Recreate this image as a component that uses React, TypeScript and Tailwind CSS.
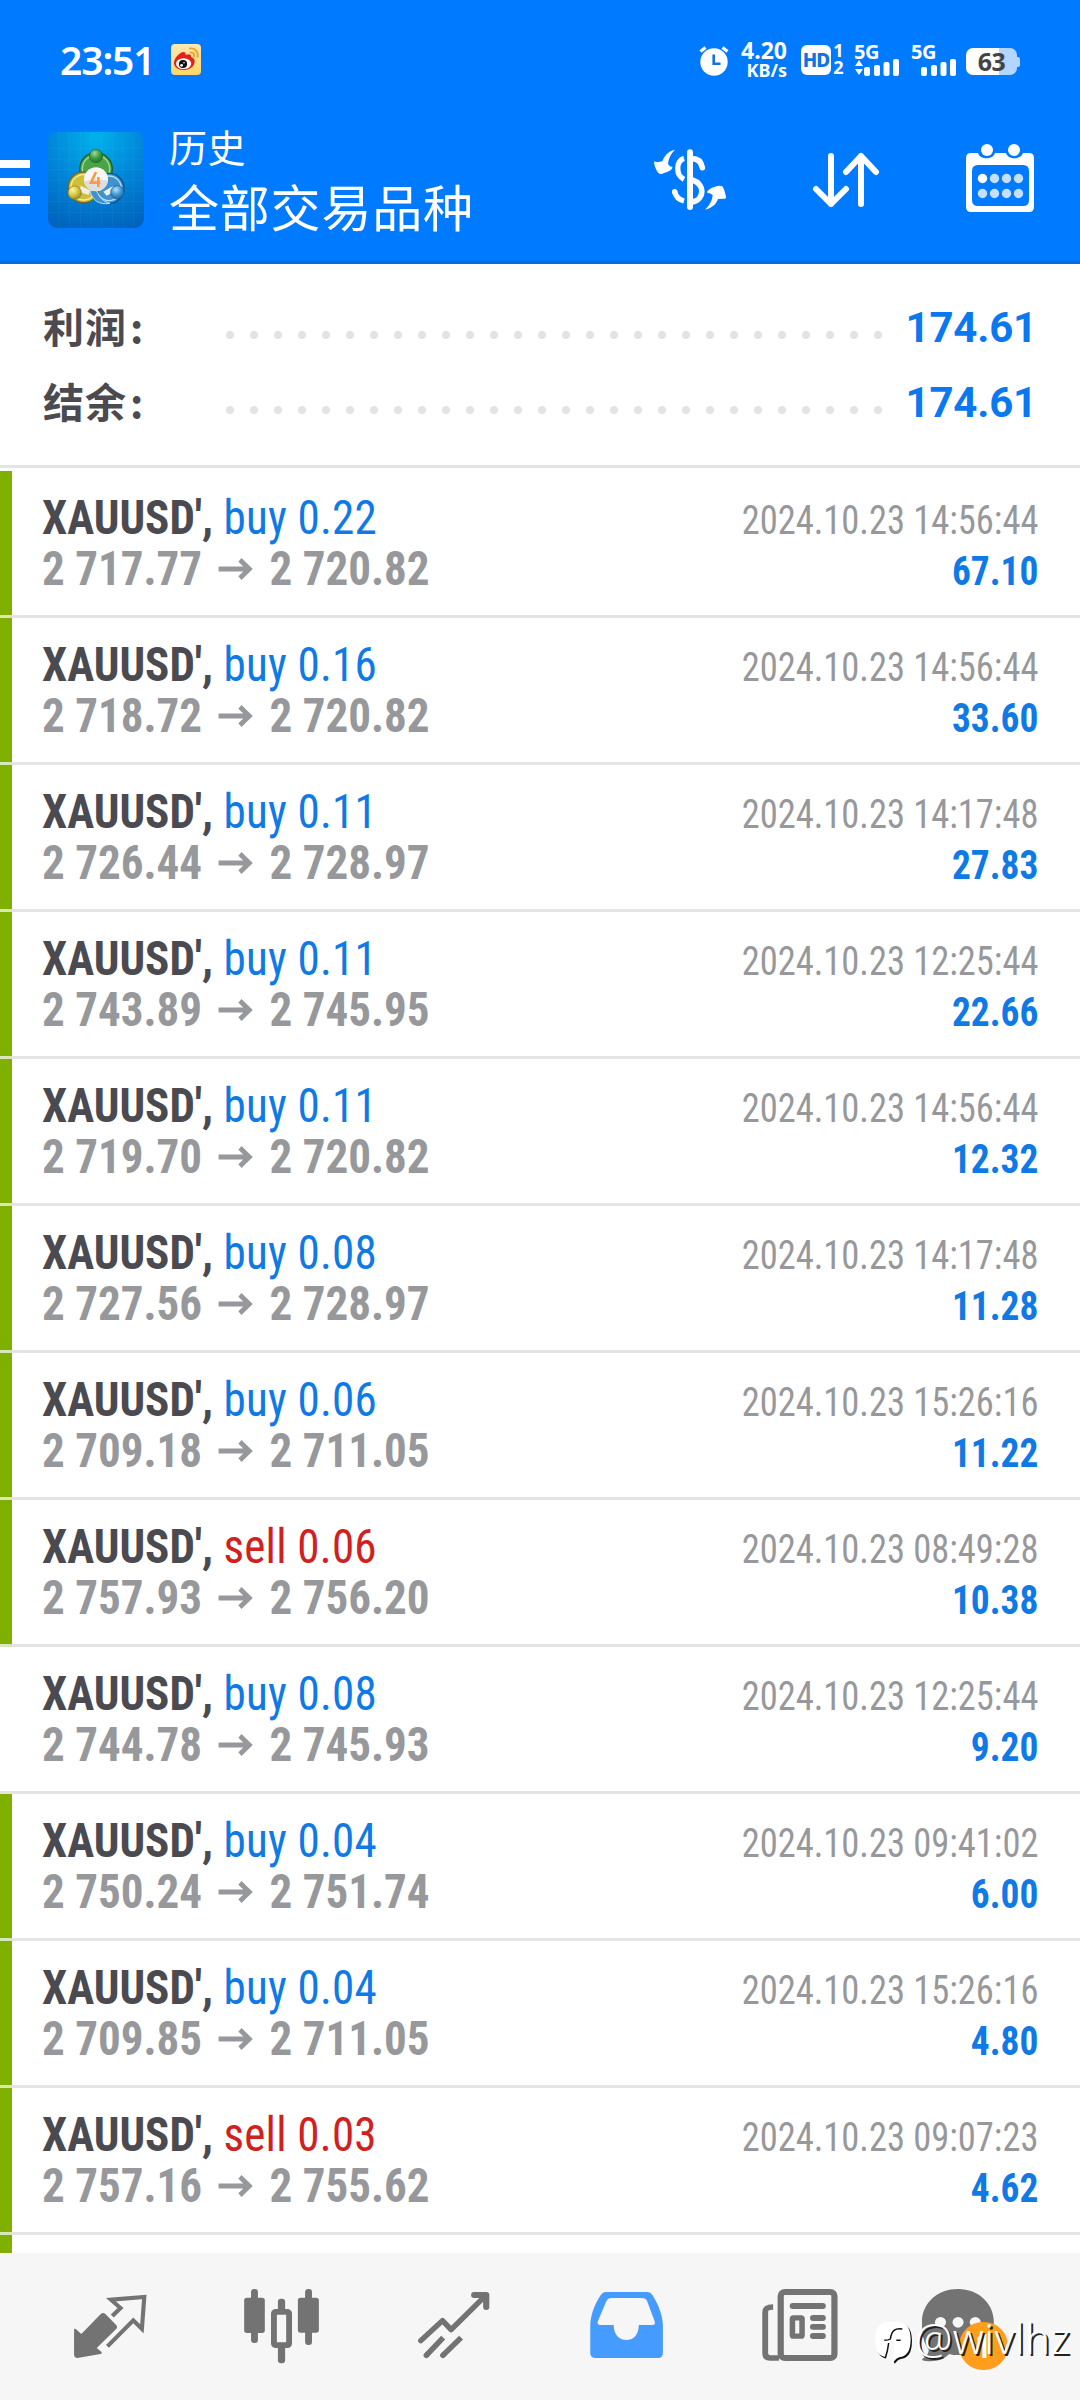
import React from "react";

type Deal = {
  side: "buy" | "sell";
  volume: string;
  from: string;
  to: string;
  time: string;
  profit: string;
  marked: boolean;
};

const deals: Deal[] = [
  { side: "buy", volume: "0.22", from: "2 717.77", to: "2 720.82", time: "14:56:44", profit: "67.10", marked: true },
  { side: "buy", volume: "0.16", from: "2 718.72", to: "2 720.82", time: "14:56:44", profit: "33.60", marked: true },
  { side: "buy", volume: "0.11", from: "2 726.44", to: "2 728.97", time: "14:17:48", profit: "27.83", marked: true },
  { side: "buy", volume: "0.11", from: "2 743.89", to: "2 745.95", time: "12:25:44", profit: "22.66", marked: true },
  { side: "buy", volume: "0.11", from: "2 719.70", to: "2 720.82", time: "14:56:44", profit: "12.32", marked: true },
  { side: "buy", volume: "0.08", from: "2 727.56", to: "2 728.97", time: "14:17:48", profit: "11.28", marked: true },
  { side: "buy", volume: "0.06", from: "2 709.18", to: "2 711.05", time: "15:26:16", profit: "11.22", marked: true },
  { side: "sell", volume: "0.06", from: "2 757.93", to: "2 756.20", time: "08:49:28", profit: "10.38", marked: true },
  { side: "buy", volume: "0.08", from: "2 744.78", to: "2 745.93", time: "12:25:44", profit: "9.20", marked: false },
  { side: "buy", volume: "0.04", from: "2 750.24", to: "2 751.74", time: "09:41:02", profit: "6.00", marked: true },
  { side: "buy", volume: "0.04", from: "2 709.85", to: "2 711.05", time: "15:26:16", profit: "4.80", marked: true },
  { side: "sell", volume: "0.03", from: "2 757.16", to: "2 755.62", time: "09:07:23", profit: "4.62", marked: true },
];

function WeiboIcon() {
  return (
    <svg className="ml-[19px] h-[31px] w-[30px]" viewBox="0 0 30 31">
      <defs>
        <linearGradient id="wb" x1="0" y1="0" x2="0" y2="1">
          <stop offset="0" stopColor="#fbe9b4" />
          <stop offset="1" stopColor="#ffd667" />
        </linearGradient>
      </defs>
      <rect width="30" height="31" rx="4" fill="url(#wb)" />
      <path d="M3 19c0-5 6-11 9.500-11 2 0 2.500 1.500 2 3 3-1.500 6-1 5.500 2 3.500 1 4.500 4 3 7.500-2 4-6.500 5.500-10.500 5.500C7 26 3 23 3 19z" fill="#e3201c" />
      <ellipse cx="12.600" cy="19.600" rx="7.600" ry="5.400" fill="#fff" />
      <circle cx="12" cy="20" r="4.100" fill="#111" />
      <circle cx="10.600" cy="21.300" r="1.400" fill="#fff" />
      <circle cx="13" cy="18.800" r=".8" fill="#fff" />
      <path d="M19 4.500c5-1 8.500 3.500 7.500 8.500M19.500 8.500c2.500-.5 4.200 1.500 3.600 4" fill="none" stroke="#f0a02c" strokeWidth="1.900" strokeLinecap="round" />
    </svg>
  );
}

function AlarmIcon() {
  return (
    <svg className="h-[30px] w-[30px]" viewBox="0 0 30 30">
      <circle cx="15" cy="16" r="13.700" fill="#fff" />
      <path d="M1.500 5.500 6.500 1.500M28.500 5.500 23.500 1.500" stroke="#fff" strokeWidth="3.200" />
      <path d="M14.700 8.500v9.300h6.800" fill="none" stroke="#1272e0" strokeWidth="2.600" />
    </svg>
  );
}

function Signal({ data }: { data?: boolean }) {
  return (
    <div className="relative h-[32px] w-[45px]">
      <span className="absolute left-[-1px] top-[-3px] text-[20px] font-bold leading-[22px] tracking-[-0.5px]">5G</span>
      <svg className="absolute left-0 top-0 h-[32px] w-[45px]" viewBox="0 0 45 32" fill="#fff">
        {data && <path d="M0 22 4 16l4 6zM0 25h8l-4 6z" />}
        <rect x="9" y="23" width="6" height="9" rx="2" />
        <rect x="19" y="21" width="6" height="11" rx="2" />
        <rect x="28.500" y="18" width="6" height="14" rx="2" />
        <rect x="38" y="15" width="6" height="17" rx="2" />
      </svg>
    </div>
  );
}

function StatusBar() {
  return (
    <div className="flex h-[120px] items-start justify-between pl-[60px] pr-[60px] pt-[44px] font-['Noto_Sans',sans-serif] text-white">
      <div className="flex items-center">
        <span className="w-[92px] whitespace-nowrap text-[39px] font-semibold leading-[31px] tracking-[-1.1px]">23:51</span>
        <WeiboIcon />
      </div>
      <div className="flex items-start">
        <div className="pt-[2px]"><AlarmIcon /></div>
        <div className="ml-[11px] mt-[-4px] flex w-[47px] flex-col items-end whitespace-nowrap font-bold">
          <span className="text-[23px] leading-[21px]">4.20</span>
          <span className="text-[18px] leading-[18px]">KB/s</span>
        </div>
        <div className="ml-[14px] mt-[1px] flex h-[30px] w-[30px] items-center justify-center rounded-[6px] bg-white text-[19px] font-extrabold leading-none tracking-[-1px] text-[#1272e0]">HD</div>
        <div className="ml-[2px] flex w-[11px] flex-col items-center text-[18px] font-bold leading-[17px]">
          <span className="-mt-[2px]">1</span>
          <span>2</span>
        </div>
        <div className="ml-[11px]"><Signal data /></div>
        <div className="ml-[12px]"><Signal /></div>
        <div className="ml-[9px] mt-[4px] flex items-center">
          <div className="flex h-[27px] w-[51px] items-center justify-center rounded-[7px] bg-[linear-gradient(to_right,#fff_64%,#b3d5ff_64%)] text-[25px] font-bold leading-none tracking-[-0.5px] text-[#444]">63</div>
          <div className="h-[10px] w-[3px] rounded-r-[2px] bg-[#b3d5ff]" />
        </div>
      </div>
    </div>
  );
}

function AppLogo() {
  return (
    <svg className="h-[96px] w-[96px]" viewBox="24 21 288 288">
      <defs>
        <radialGradient id="lg" cx=".5" cy=".05" r="1">
          <stop offset="0" stopColor="#00b2ec" />
          <stop offset=".5" stopColor="#0086d8" />
          <stop offset="1" stopColor="#0063bd" />
        </radialGradient>
        <radialGradient id="gn" cx=".4" cy=".3" r=".8"><stop offset="0" stopColor="#9fd89a" /><stop offset=".5" stopColor="#3c9a3e" /><stop offset="1" stopColor="#1d6b2b" /></radialGradient>
        <radialGradient id="yl" cx=".35" cy=".3" r=".8"><stop offset="0" stopColor="#fbf5a8" /><stop offset=".5" stopColor="#d9c63c" /><stop offset="1" stopColor="#8c8128" /></radialGradient>
        <radialGradient id="bl" cx=".4" cy=".3" r=".8"><stop offset="0" stopColor="#b5e0f8" /><stop offset=".5" stopColor="#3f97d4" /><stop offset="1" stopColor="#12578f" /></radialGradient>
      </defs>
      <rect x="24" y="21" width="288" height="288" rx="27" fill="url(#lg)" />
      <path d="M57 21v288M89 21v288M121 21v288M153 21v288M185 21v288M217 21v288M249 21v288M281 21v288M24 70h288M24 102h288M24 134h288M24 166h288M24 198h288M24 230h288M24 262h288" stroke="#fff" strokeOpacity=".07" strokeWidth="2" />
      <circle cx="168" cy="132" r="49" fill="#4aa346" stroke="#1f5f2a" strokeWidth="4" />
      <circle cx="168" cy="132" r="41" fill="none" stroke="#a5d69c" strokeWidth="4" />
      <path d="M154 170V140q14-16 28 0v30z" fill="#1f6f2f" />
      <circle cx="207" cy="190" r="45" fill="#3f93d0" stroke="#12508a" strokeWidth="4" />
      <circle cx="207" cy="190" r="37" fill="none" stroke="#b6e0f6" strokeWidth="4" />
      <circle cx="131" cy="187" r="46" fill="#cdbf3a" stroke="#706a22" strokeWidth="4" />
      <circle cx="131" cy="187" r="38" fill="none" stroke="#f3ec96" strokeWidth="4" />
      <path d="M168 190c6 24 18 38 42 45-34 6-52-10-60-36z" fill="#3f93d0" stroke="#b6e0f6" strokeWidth="3" />
      <path d="M122 182 150 196 146 210 118 200zM190 200 218 184 222 200 200 212z" fill="#eef0e4" />
      <circle cx="168" cy="93" r="20" fill="url(#gn)" stroke="#1d6b2b" strokeWidth="2" />
      <circle cx="104" cy="203" r="20" fill="url(#yl)" stroke="#857a22" strokeWidth="2" />
      <circle cx="232" cy="202" r="20" fill="url(#bl)" stroke="#12578f" strokeWidth="2" />
      <circle cx="168" cy="163" r="36" fill="#f8f6f4" />
      <path d="M132 169a36 36 0 0 0 71-2c-20-4-50-4-71 2z" fill="#dedede" />
      <path d="M168 141 153 173h28M175 156v30" fill="none" stroke="#f79a4b" strokeWidth="8" />
    </svg>
  );
}

function CurrencyIcon() {
  return (
    <svg className="h-[72px] w-[80px]" viewBox="30 40 240 216">
      <path d="M105 60C92 62 75 72 67 95L51 98c-5-4-9-4-9 2 3 14 8 24 14 31 5 3 11 2 16-1 10-3 19-7 24-13 3-5 0-8-5-6l-7-8c1-16 8-30 21-43z" fill="#fff" />
      <path d="M195 240c10-2 32-10 39-32l15-1c6 1 9 0 9-6-3-12-5-23-11-31-7-3-12-2-18 0-11 3-22 8-27 15-2 5 2 7 6 5l10 6c-1 16-10 32-23 44z" fill="#fff" />
      <g fill="none" stroke="#fff" strokeLinecap="round">
        <path d="M150 68v164" strokeWidth="18" />
        <path d="M157 87c14 0 26 8 30 27" strokeWidth="17" />
        <path d="M157 151c38 12 38 58 0 66" strokeWidth="17" strokeLinecap="butt" />
        <path d="M132 86c-24 7-26 50 0 63" strokeWidth="16" strokeLinecap="butt" />
        <path d="M104 186c3 14 12 24 28 28" strokeWidth="16" strokeLinecap="butt" />
        <path d="M104 186v1" strokeWidth="16" />
      </g>
    </svg>
  );
}

function SortIcon() {
  return (
    <svg className="h-[56px] w-[68px]" viewBox="0 0 68 56" fill="none" stroke="#fff" strokeWidth="6" strokeLinecap="round" strokeLinejoin="round">
      <path d="M19 4v48M4 37l15 15 15-15M49 52V4M34 20 49 4l15 16" />
    </svg>
  );
}

function CalendarIcon() {
  return (
    <svg className="h-[70px] w-[70px]" viewBox="0 0 70 70">
      <path d="M6 10h7c2 7 15 7 17 0h11c2 7 15 7 17 0h6q5 0 5 5v49q0 5-5 5H6q-5 0-5-5V15q0-5 5-5zM13 22q-6 0-6 6v29q0 6 6 6h45q6 0 6-6V28q0-6-6-6z" fill="#fff" fillRule="evenodd" />
      <circle cx="22" cy="7" r="6" fill="#fff" />
      <circle cx="49" cy="7" r="6" fill="#fff" />
      <g fill="#c3e0ff">
        <circle cx="17.500" cy="35.500" r="4.700" fill="#fff" />
        <circle cx="29.500" cy="35.500" r="4.700" />
        <circle cx="41.500" cy="35.500" r="4.700" />
        <circle cx="53.500" cy="35.500" r="4.700" />
        <circle cx="17.500" cy="50.500" r="4.700" />
        <circle cx="29.500" cy="50.500" r="4.700" />
        <circle cx="41.500" cy="50.500" r="4.700" />
        <circle cx="53.500" cy="50.500" r="4.700" />
      </g>
    </svg>
  );
}

function Header() {
  return (
    <header className="h-[264px] shrink-0 border-b-[3px] border-[#0b6cd6] bg-[#007aff]">
      <StatusBar />
      <div className="flex items-start pt-[12px] font-['Noto_Sans_CJK_SC',sans-serif] text-white">
        <div className="mt-[28px] flex w-[30px] flex-col gap-[10px]">
          <span className="h-[8px] bg-white" />
          <span className="h-[8px] bg-white" />
          <span className="h-[8px] bg-white" />
        </div>
        <div className="ml-[18px]"><AppLogo /></div>
        <div className="ml-[25px] flex w-[480px] flex-col whitespace-nowrap">
          <span className="-mt-[6px] text-[38px] leading-[40px] tracking-[0.5px]">历史</span>
          <span className="mt-[9px] text-[50px] leading-[60px] tracking-[0.8px]">全部交易品种</span>
        </div>
        <div className="mt-[11px] ml-[1px]"><CurrencyIcon /></div>
        <div className="mt-[20px] ml-[82px]"><SortIcon /></div>
        <div className="mt-[11px] ml-[85px]"><CalendarIcon /></div>
      </div>
    </header>
  );
}

function SummaryLine({ label, value }: { label: string; value: string }) {
  return (
    <div className="flex h-[75px] items-center">
      <span className="flex w-[183px] whitespace-nowrap pb-[4px] font-['Noto_Sans_CJK_SC',sans-serif] text-[41px] font-bold leading-[60px] tracking-[1px] text-[#4a4a50]">
        {label}
        <span className="ml-[3px]">:</span>
      </span>
      <div className="mt-[17px] flex w-[656px] gap-[16px]">
        {Array.from({ length: 28 }, (_, i) => (
          <span key={i} className="h-[8px] w-[8px] rounded-full bg-[#e3e3e3]" />
        ))}
      </div>
      <span className="ml-auto whitespace-nowrap pt-[2px] text-right font-['Roboto',sans-serif] text-[42px] font-bold leading-[60px] tracking-[-0.2px] text-[#0a78ee] [font-stretch:100%]">{value}</span>
    </div>
  );
}

function DealRow({ deal }: { deal: Deal }) {
  return (
    <div className="relative flex h-[147px] shrink-0 border-b-[3px] border-[#e4e4e4]">
      {deal.marked && <span className="-mb-[3px] w-[12px] border-b-[3px] border-[#d9e6b8] bg-[#7fb000]" />}
      <div className={deal.marked ? "ml-[30px] mt-[19px] origin-left scale-x-[.938]" : "ml-[42px] mt-[19px] origin-left scale-x-[.938]"}>
        <div className="h-[52px] whitespace-nowrap text-[48px] leading-[56px]">
          <span className="font-bold text-[#4a4a50]">XAUUSD', </span>
          <span className={deal.side === "buy" ? "tracking-[0.25px] text-[#0f79e6]" : "tracking-[0.25px] text-[#d02020]"}>{deal.side} {deal.volume}</span>
        </div>
        <div className="flex h-[53px] items-center whitespace-nowrap text-[48px] font-bold leading-[56px] text-[#97989b]">
          <span>{deal.from}</span>
          <svg className="ml-[17px] mr-[18px] h-[22px] w-[37px]" viewBox="0 0 37 22" fill="none" stroke="#97989b" strokeWidth="5">
            <path d="M0 11h33M23 1.800 33 11l-10 9.200" />
          </svg>
          <span>{deal.to}</span>
        </div>
      </div>
      <div className="ml-auto mr-[42px] mt-[23px] whitespace-nowrap text-right text-[40px]">
        <div className="h-[51px] origin-right scale-x-[.912] leading-[54px] text-[#97989b]">2024.10.23 {deal.time}</div>
        <div className="origin-right scale-x-[.935] font-bold leading-[54px] text-[#0f79e6]">{deal.profit}</div>
      </div>
    </div>
  );
}

function NavIcon({ x, children }: { x: number; children: React.ReactNode }) {
  return (
    <div className="flex flex-1 justify-center">
      <svg className="h-[96px] w-[96px]" viewBox="0 0 96 96" fill="#737373" stroke="none">
        <g transform={`scale(.34435 .33333) translate(${-x} -240)`}>{children}</g>
      </svg>
    </div>
  );
}

function BottomNav() {
  return (
    <nav className="relative flex h-[147px] shrink-0 bg-[#f6f6f6] px-[24px] pt-[27px]">
      <NavIcon x={180}>
        <path d="M215 389q0-4 5-2l16 15 56-59q7-8 14-1l32 34q4 5 0 10l-57 58 13 11q4 5-3 7l-66 12q-10 0-10-11z" />
        <path d="M326 348l24-24-28-25 97-8-7 96-25-26-75 78" fill="none" stroke="#737373" strokeWidth="12" />
      </NavIcon>
      <NavIcon x={679.5}>
        <rect x="729" y="267" width="20" height="162" rx="9" />
        <rect x="709" y="293" width="60" height="106" rx="8" />
        <rect x="886" y="267" width="20" height="168" rx="9" />
        <rect x="865" y="293" width="61" height="105" rx="8" />
        <rect x="807" y="296" width="21" height="194" rx="9" />
        <rect x="795.500" y="335.500" width="44" height="100" rx="5" fill="#f6f6f6" stroke="#737373" strokeWidth="17" />
      </NavIcon>
      <NavIcon x={1179}>
        <g fill="none" stroke="#737373" strokeWidth="16" strokeLinecap="round" strokeLinejoin="round">
          <path d="M1222 422l63-60 25 27 100-102" />
          <path d="M1377 285h35v36" strokeWidth="18" />
          <path d="M1238 466l49-53M1286 466l53-53" strokeLinecap="butt" />
          <path d="M1238 466l2-2M1286 466l2-2" />
        </g>
      </NavIcon>
      <NavIcon x={110.4}>
        <path fillRule="evenodd" fill="#469bfe" d="M193 276h118q11 0 16 10c16 26 30 61 30 92v80q0 16-15 16H162q-16 0-16-16v-80c0-31 13-66 30-92q6-10 17-10zM208 294q-11 0-15 9l-25 61q-3 11 7 11h39c0 28 15 45 37 45s36-17 36-45h39q11 0 7-11l-22-61q-4-9-15-9z" />
      </NavIcon>
      <NavIcon x={609.8}>
        <rect x="699" y="276" width="156" height="198" rx="12" fill="none" stroke="#737373" strokeWidth="18" />
        <path d="M677 321c-16 0-23 3-23 15v124c0 10 5 14 14 14h26" fill="none" stroke="#737373" strokeWidth="17" />
        <rect x="725" y="309" width="105" height="18" rx="9" />
        <rect x="784" y="345" width="46" height="18" rx="9" />
        <rect x="784" y="372" width="46" height="17" rx="8" />
        <rect x="784" y="399" width="46" height="18" rx="9" />
        <rect x="733" y="353.500" width="28" height="55" rx="3" fill="none" stroke="#737373" strokeWidth="16" />
      </NavIcon>
      <NavIcon x={1109.3}>
        <path d="M1214 267c60 0 104 44 104 99 0 60-44 99-104 99-10 0-18 0-26-3-16 17-38 24-68 21q-14-2-9-7c12-8 17-15 18-26-16-22-20-50-20-84 0-55 44-99 105-99z" />
        <circle cx="1163" cy="367" r="16" fill="#f6f6f6" />
        <circle cx="1214" cy="367" r="16" fill="#f6f6f6" />
        <circle cx="1264" cy="367" r="16" fill="#f6f6f6" />
      </NavIcon>
      <span className="absolute left-[959px] top-[69px] flex h-[48px] w-[49px] items-center justify-center rounded-full bg-[#ff9d1c] font-['Roboto',sans-serif] text-[34px] font-medium leading-none text-white">1</span>
      <div className="absolute left-[873px] top-[67px] flex items-start">
        <svg className="h-[45px] w-[40px] shrink-0 overflow-visible" viewBox="15 15 120 135">
          <path d="M75 20c38 0 52 12 53 52 0 40-14 52-34 55-8 2-12 8-18 14l-6-13c-36-1-48-14-48-56 0-40 14-52 53-52z" fill="#111" transform="translate(4 5)" />
          <path d="M75 20c38 0 52 12 53 52 0 40-14 52-34 55-8 2-12 8-18 14l-6-13c-36-1-48-14-48-56 0-40 14-52 53-52z" fill="#fff" />
          <path d="M52 134c6-14 10-34 13-56h16c-3 20-5 40-6 68l-10-12z" fill="#f8f8f8" />
          <path d="M103 42c-22-3-32 4-36 30q-6 4-18 4M85 76h13M62 84c-2 18-5 30-10 45" fill="none" stroke="#111" strokeWidth="4.500" />
        </svg>
        <span className="ml-[2px] mt-[-7px] whitespace-nowrap font-['Noto_Sans',sans-serif] text-[42px] font-light leading-[50px] tracking-[0.5px] text-white [text-shadow:2px_2px_0_#222]">@wivlhz</span>
      </div>
    </nav>
  );
}

export default function App() {
  return (
    <div className="flex h-[2400px] w-[1080px] flex-col overflow-hidden bg-white font-['Roboto_Condensed','Roboto',sans-serif] [font-stretch:75%]">
      <Header />
      <section className="h-[207px] shrink-0">
        <div className="h-[204px] border-b-[3px] border-[#e4e4e4] pl-[43px] pr-[43px] pt-[25px]">
          <SummaryLine label="利润" value="174.61" />
          <SummaryLine label="结余" value="174.61" />
        </div>
      </section>
      <main className="flex h-[1782px] shrink-0 flex-col overflow-hidden">
        {deals.map((deal, i) => (
          <DealRow key={i} deal={deal} />
        ))}
        <div className="h-[18px] w-[12px] shrink-0 bg-[#7fb000]" />
      </main>
      <BottomNav />
    </div>
  );
}
